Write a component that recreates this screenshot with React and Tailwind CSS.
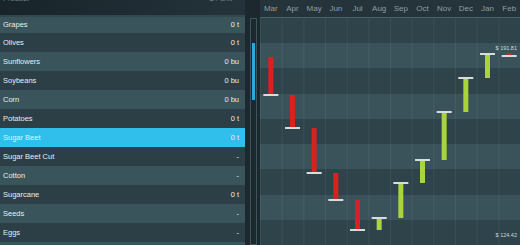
import React from "react";

const products = [
  ["Grapes", "0 t"],
  ["Olives", "0 t"],
  ["Sunflowers", "0 bu"],
  ["Soybeans", "0 bu"],
  ["Corn", "0 bu"],
  ["Potatoes", "0 t"],
  ["Sugar Beet", "0 t"],
  ["Sugar Beet Cut", "-"],
  ["Cotton", "-"],
  ["Sugarcane", "0 t"],
  ["Seeds", "-"],
  ["Eggs", "-"],
  ["", ""],
];

const months = ["Mar", "Apr", "May", "Jun", "Jul", "Aug", "Sep", "Oct", "Nov", "Dec", "Jan", "Feb"];

// [open, close] in chart-body y coordinates (down = lower price)
const candles = [
  [39, 77],
  [77, 110],
  [110, 155],
  [155, 182],
  [182, 212],
  [212, 200],
  [200, 165],
  [165, 142],
  [142, 94],
  [94, 60],
  [60, 36],
  [35, 38],
];

const COLW = 260 / 12;

function Chart() {
  return (
    <svg width="260" height="227" viewBox="0 0 260 227" className="absolute inset-0">
      {Array.from({ length: 12 }).map((_, i) => (
        <rect key={"g" + i} x={i * COLW} y="0" width="1" height="227" fill="rgba(255,255,255,0.06)" />
      ))}
      {candles.map(([o, c], i) => {
        const cx = i * COLW + COLW / 2;
        const down = c > o;
        const top = Math.min(o, c);
        const h = Math.abs(c - o);
        return (
          <g key={i}>
            <rect x={cx - 2.5} y={top} width="5" height={h} fill={down ? "#d82222" : "#a9d43e"} />
            <rect x={cx - 7.5} y={c - 1} width="15" height="2" fill="#d9dcdc" />
          </g>
        );
      })}
    </svg>
  );
}

export default function App() {
  return (
    <div
      className="flex h-[245px] w-[520px] overflow-hidden bg-[#1c282d] text-[#e6eef0]"
      style={{ fontFamily: "'Liberation Sans', Arial, sans-serif" }}
    >
      {/* Left list */}
      <div className="flex w-[245px] flex-col">
        <div className="flex h-[17px] shrink-0 items-start justify-between overflow-hidden border-b-2 border-[#34474e] bg-gradient-to-r from-[#18242a] to-[#24333a] px-[3px] text-[7.5px] leading-none text-[#72868c]">
          <span className="-mt-[5px]">Product</span>
          <span className="-mt-[5px] mr-[10px]">$ / unit</span>
        </div>
        <div className="flex flex-col">
          {products.map(([name, val], i) => {
            const selected = name === "Sugar Beet";
            const bg = selected ? "bg-[#2fbfea]" : i % 2 === 0 ? "bg-[#3a545c]" : "bg-[#2c3f46]";
            const h = i === 0 ? "h-[16px]" : "h-[19px]";
            return (
              <div
                key={i}
                className={`flex ${h} shrink-0 items-center justify-between px-[3px] pr-[6px] text-[7.5px] leading-none ${bg}`}
              >
                <span>{name}</span>
                <span>{val}</span>
              </div>
            );
          })}
        </div>
      </div>

      {/* Scrollbar */}
      <div className="flex w-[15px] flex-col pl-[5px] pt-[18px]">
        <div className="flex w-[7px] flex-1 flex-col border border-[#3c545c] bg-[#1b282d]">
          <div className="mx-auto mt-[24px] h-[57px] w-[3px] bg-[#29a9d9]" />
        </div>
      </div>

      {/* Chart */}
      <div className="flex w-[260px] flex-col">
        <div className="flex h-[18px] shrink-0 border-b border-[#4a6169] bg-[#25343a]">
          {months.map((m) => (
            <div key={m} className="flex flex-1 items-center justify-center text-[8px] leading-none text-[#8c9fa5]">
              {m}
            </div>
          ))}
        </div>
        <div className="relative flex flex-1 flex-col">
          {Array.from({ length: 9 }).map((_, i) => (
            <div key={i} className={`flex-1 ${i % 2 === 0 ? "bg-[#2e434a]" : "bg-[#3a535b]"}`} />
          ))}
          <Chart />
          <div className="absolute right-[3px] top-[28px] text-[5.5px] leading-none text-[#cfd8da]">$ 191.81</div>
          <div className="absolute right-[3px] top-[215px] text-[5.5px] leading-none text-[#cfd8da]">$ 124.42</div>
        </div>
      </div>
    </div>
  );
}
